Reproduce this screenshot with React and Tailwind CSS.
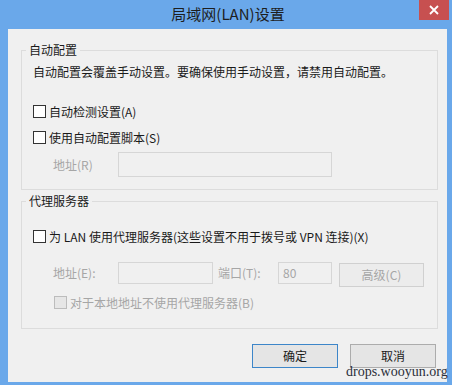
const font = { fontFamily: '"Noto Sans CJK SC", "Noto Sans", sans-serif' };

function Check({ disabled }) {
  return (
    <span
      className={
        "block w-[13px] h-[13px] shrink-0 border " +
        (disabled ? "border-[#bcbcbc] bg-[#e6e6e6]" : "border-[#333333] bg-white")
      }
    />
  );
}

function Group({ title, className, children }) {
  return (
    <fieldset className={"mx-[13px] w-[417px] border border-[#dcdcdc] px-[11px] " + className}>
      <legend className="ml-[-7px] px-[3px] text-[12px] leading-[14px] text-[#1a1a1a]">{title}</legend>
      {children}
    </fieldset>
  );
}

export default function App() {
  return (
    <div
      className="relative w-[452px] h-[385px] bg-[#6aa8ea] flex flex-col overflow-hidden"
      style={font}
    >
      {/* title bar */}
      <div className="relative h-[29px] shrink-0 flex items-center justify-center">
        <span className="text-[15px] leading-[18px] text-[#1e1e1e] pl-[4px] pb-[2px]">局域网(LAN)设置</span>
        <button className="absolute right-[3px] top-0 w-[30px] h-[20px] bg-[#c75050] flex items-center justify-center">
          <svg width="10" height="10" viewBox="0 0 10 10">
            <path d="M1 1 L9 9 M9 1 L1 9" stroke="#ffffff" strokeWidth="1.8" />
          </svg>
        </button>
      </div>

      {/* client */}
      <div className="ml-[8px] mr-[5px] h-[353px] bg-[#f0f0f0] flex flex-col text-[12px] text-[#1a1a1a]">
        <Group title="自动配置" className="mt-[14px] pb-[12px]">
          <div className="mt-[7px] leading-[16px] h-[16px]">
            自动配置会覆盖手动设置。要确保使用手动设置，请禁用自动配置。
          </div>
          <div className="mt-[25px] h-[13px] flex items-center gap-[3px]">
            <Check />
            <span className="leading-[14px]">自动检测设置(A)</span>
          </div>
          <div className="mt-[13px] h-[13px] flex items-center gap-[3px]">
            <Check />
            <span className="leading-[14px]">使用自动配置脚本(S)</span>
          </div>
          <div className="mt-[8px] h-[25px] flex items-center">
            <span className="w-[85px] pl-[20px] text-[#a6a6a6]">地址(R)</span>
            <div className="w-[214px] h-[25px] border border-[#d6d6d6] bg-[#f0f0f0]" />
          </div>
        </Group>

        <Group title="代理服务器" className="mt-[4px] pb-[19px]">
          <div className="mt-[22px] h-[13px] flex items-center gap-[3px]">
            <Check />
            <span className="leading-[14px]">为 LAN 使用代理服务器(这些设置不用于拨号或 VPN 连接)(X)</span>
          </div>
          <div className="mt-[19px] h-[25px] flex items-start text-[#a6a6a6]">
            <span className="w-[85px] pl-[20px] leading-[22px]">地址(E):</span>
            <div className="w-[95px] h-[22px] border border-[#d6d6d6] bg-[#f0f0f0]" />
            <span className="ml-[5px] w-[60px] leading-[22px]">端口(T):</span>
            <div className="w-[54px] h-[22px] border border-[#d6d6d6] bg-[#f0f0f0] pl-[4px] leading-[20px]">80</div>
            <div className="ml-[7px] mt-[1px] w-[85px] h-[24px] border border-[#d0d0d0] bg-[#ececec] flex items-center justify-center">
              高级(C)
            </div>
          </div>
          <div className="mt-[9px] h-[13px] flex items-center gap-[3px] pl-[21px]">
            <Check disabled />
            <span className="leading-[14px] text-[#a6a6a6]">对于本地地址不使用代理服务器(B)</span>
          </div>
        </Group>

        <div className="mt-[15px] mr-[11px] flex justify-end gap-[12px]">
          <button className="w-[86px] h-[24px] border border-[#3d86c9] bg-[#e5e5e5] text-[12px] text-[#1a1a1a]">
            确定
          </button>
          <button className="w-[86px] h-[24px] border border-[#acacac] bg-[#e5e5e5] text-[12px] text-[#1a1a1a]">
            取消
          </button>
        </div>
      </div>

      {/* watermark */}
      <span
        className="absolute left-[346px] top-[364px] text-[14px] leading-[16px] text-[#2b2f3a]"
        style={{ fontFamily: '"Liberation Serif", serif' }}
      >
        drops.wooyun.org
      </span>
    </div>
  );
}
